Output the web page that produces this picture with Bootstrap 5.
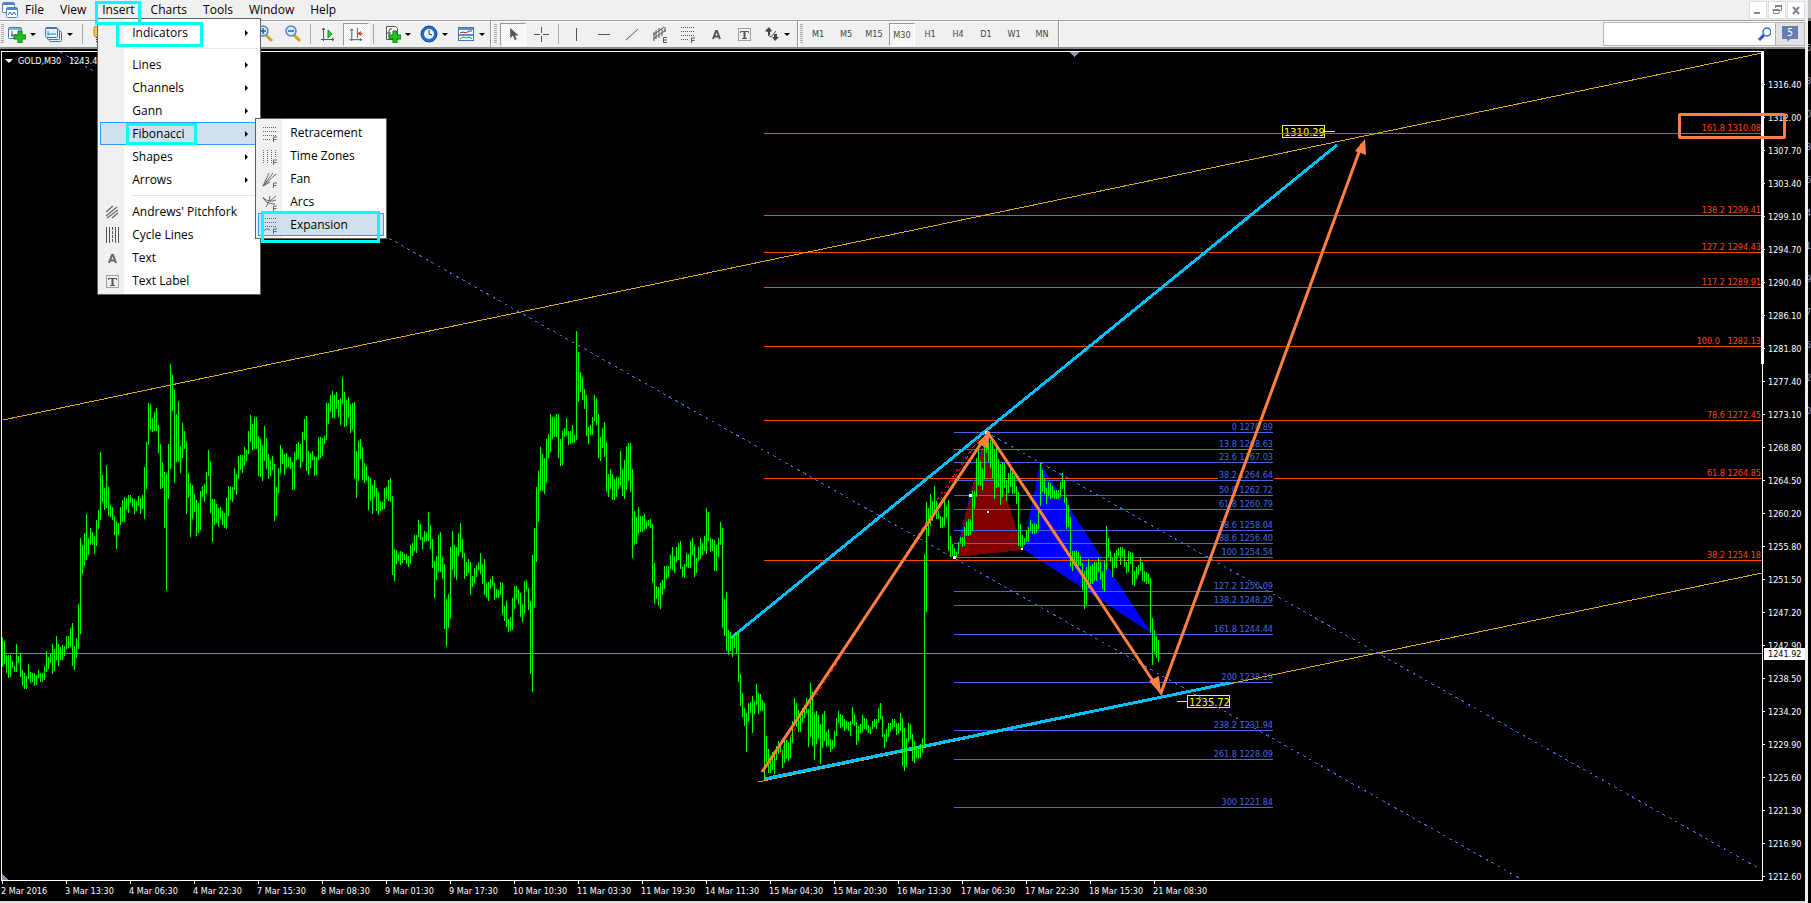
<!DOCTYPE html>
<html lang="en">
<head>
<meta charset="utf-8">
<meta name="viewport" content="width=device-width, initial-scale=1">
<title>GOLD,M30</title>
<link href="https://cdn.jsdelivr.net/npm/bootstrap@5.3.0/dist/css/bootstrap.min.css" rel="stylesheet">
<style>
  :root { --face: #f0f0f0; --edge: #a0a0a0; --cyan: #0ff; --coral: #ff8040; }
  body { background: #000; font-family: "Open Sans", "Noto Sans", sans-serif; font-size: 12px; line-height: 16px; color: #000; }
  button, a, input { font: inherit; color: inherit; }
  .plain { background: none; border: 0; padding: 0; }

  /* menu bar */
  .menubar { height: 20px; background: var(--face); }
  .menubar .app-icon { width: 20px; padding-left: 2px; }
  .menubar .menus { gap: 16px; padding-left: 5px; }
  .menus a { color: #000; text-decoration: none; display: block; line-height: 20px; }
  .win-btn { width: 18px; height: 18px; background: #fff; border: 1px solid #dedede; }

  /* toolbar */
  .toolbar { height: 29px; background: var(--face); border-top: 1px solid var(--edge); border-bottom: 2px solid #8c8c8c; box-shadow: inset 0 1px #fff; }
  .cell { width: 28px; height: 26px; display: flex; align-items: center; justify-content: center; font-family: "DejaVu Sans Condensed", sans-serif; font-size: 9px; color: #444; }
  .drop { width: 37px; height: 26px; display: flex; align-items: center; gap: 4px; padding-left: 3px; }
  .drop::after { content: ""; border: 3px solid transparent; border-top-color: #000; border-bottom: 0; }
  .drop-wide { padding-left: 6px; }
  .pressed > span, .pressed > svg { background: repeating-conic-gradient(#fff 0 25%, #eee 0 50%) 0 0 / 2px 2px; border: 1px solid #fff; border-top-color: #999; border-left-color: #999; width: 26px; height: 23px; padding: 3px 4px; }
  .pressed > span { padding: 3px 0; text-align: center; }
  .vsep { width: 7px; height: 20px; background: linear-gradient(#aaa, #aaa) 3px 0 / 1px 100% no-repeat; }
  .band-end { width: 4px; height: 26px; background: linear-gradient(90deg, #999 1px, #fff 1px) 2px 0 / 2px 100% no-repeat; }
  .grip { width: 5px; height: 20px; background: repeating-linear-gradient(#aaa 0 1px, transparent 1px 2px) 1px 0 / 3px 100% no-repeat; }
  .grip-wide { width: 7px; background-position: 2px 0; }
  .under-menu { width: 137px; }
  .find { width: 173px; height: 24px; background: #fff; border: 1px solid #b4b4b4; }
  .find input { border: 0; outline: 0; padding: 0 6px; min-width: 0; }
  .news { width: 29px; height: 24px; background: #e2e2e2; border: 1px solid #b4b4b4; border-left: 0; }

  /* drop-down menus */
  .popup { background: linear-gradient(90deg, var(--face) 26px, #fff 26px); border: 1px solid #606060; padding: 2px; z-index: 5; }
  .popup ul { margin: 0; padding: 0; list-style: none; }
  .insert-menu { position: absolute; left: -5px; top: 18px; width: 164px; }
  .fib-menu { position: absolute; left: 155px; top: -4px; width: 132px; z-index: 6; }
  .popup a { height: 23px; line-height: 23px; padding-left: 32px; position: relative; white-space: nowrap; }
  .popup a svg { position: absolute; left: 4px; top: 4px; }
  .popup a.chosen { background: #d1dfee; box-shadow: inset 0 0 0 1px #3399ff; }
  .more::after { content: ""; position: absolute; right: 10px; top: 9px; border: 3px solid transparent; border-left-color: #000; border-right: 0; }
  .rule { height: 9px; background: linear-gradient(#e4e4e4, #e4e4e4) 32px 4px / 100% 1px no-repeat; }
  .callout-box { position: absolute; border: 3px solid var(--cyan); z-index: 9; pointer-events: none; }
  .on-insert { left: -7px; top: 1px; width: 46px; height: 24px; }
  .on-indicators { left: 16px; top: 1px; width: 87px; height: 25px; }
  .on-fib { left: 26px; top: 1px; width: 71px; height: 22px; }
  .on-expansion { left: 3px; top: -2px; width: 119px; height: 32px; }

  /* chart */
  .chart-text, .chart-text text { font-family: "DejaVu Sans Condensed", "DejaVu Sans", sans-serif; font-size: 9px; line-height: 14px; }
  .chart-win { padding: 2px 0 0 1px; color: #fff; min-height: 0; }
  .plot { border: 1px solid #fff; position: relative; overflow: hidden; }
  .plot > svg { position: absolute; inset: 0; width: 100%; height: 100%; shape-rendering: crispEdges; }
  .plot text { shape-rendering: auto; }
  .plot text.tag { font-size: 11px; }
  .range { position: absolute; right: 41px; top: 2px; width: 3px; height: 313px; background: #fff; }
  .chart-title { position: absolute; left: 3px; top: 2px; gap: 5px; white-space: pre; }
  .chart-title::before { content: ""; border: 4px solid transparent; border-top-color: #fff; border-bottom: 0; }
  .prices { width: 42px; padding-top: 17px; margin-bottom: -20px; position: relative; }
  .prices div { height: 33px; display: flex; align-items: center; gap: 3px; }
  .prices div::before { content: ""; width: 2px; height: 1px; background: #fff; }
  .now { position: absolute; left: 1px; right: 0; top: 597px; height: 12px; line-height: 12px; background: #fff; color: #000; padding-left: 4px; }
  .target { position: absolute; right: 19px; top: 64px; width: 108px; height: 26px; border: 3px solid var(--coral); border-radius: 2px; }
  .times { height: 20px; overflow: hidden; }
  .times div { flex: 0 0 64px; white-space: nowrap; padding: 3px 0 0 1px; background: linear-gradient(#fff, #fff) 2px 0 / 1px 3px no-repeat; }
  .bottom-edge { height: 2px; background: #dcdcdc; }
  .next-win { width: 6px; background: #000; border-left: 3px solid #eee; overflow: hidden; color: #7fa4d8; }
  .next-head { height: 21px; background: #c4c4c4; border-bottom: 3px solid #777; margin-bottom: 11px; }
  .next-win p { height: 33px; margin: 0; text-indent: -2px; line-height: 33px; }
</style>
</head>
<body class="vh-100 d-flex overflow-hidden">
<div class="flex-grow-1 d-flex flex-column" style="min-width:0">

  <header class="menubar d-flex align-items-center">
    <div class="app-icon">
      <svg class="d-block" width="16" height="16" fill="#fff" stroke="#4a86c8"><rect x=".5" y=".5" width="12" height="10" rx="1"/><path d="M1 2h11" stroke-width="2"/><rect x="4.500" y="5.500" width="11" height="10" rx="1"/><path d="M5 7h10" stroke-width="2"/><path d="M6 13l2-3 2 3 2-3 2 3" fill="none" stroke="#3060b0"/></svg>
    </div>
    <nav aria-label="Main menu">
      <ul class="menus list-unstyled d-flex mb-0">
        <li><a href="#">File</a></li>
        <li><a href="#">View</a></li>
        <li class="position-relative"><a href="#">Insert</a><span class="callout-box on-insert"></span>
          <div class="popup insert-menu">
            <ul>
              <li class="position-relative"><a href="#" class="more">Indicators</a><span class="callout-box on-indicators"></span></li>
              <li class="rule"></li>
              <li><a href="#" class="more">Lines</a></li>
              <li><a href="#" class="more">Channels</a></li>
              <li><a href="#" class="more">Gann</a></li>
              <li class="position-relative"><a href="#" class="more chosen">Fibonacci</a><span class="callout-box on-fib"></span>
                <div class="popup fib-menu">
                  <ul>
                    <li><a href="#"><svg width="16" height="18" fill="none" stroke="#666"><path d="M1 2.500h13M1 6.500h13M1 10.500h13M1 14.500h8" stroke-dasharray="1 1"/><path d="M11.500 17v-5h3.500M11.500 14.500h3"/></svg>Retracement</a></li>
                    <li><a href="#"><svg width="16" height="18" fill="none" stroke="#666"><path d="M1.500 2v13M5.500 2v13M9.500 2v13M13.500 2v8" stroke-dasharray="1 1"/><path d="M11.500 17v-5h3.500M11.500 14.500h3"/></svg>Time Zones</a></li>
                    <li><a href="#"><svg width="16" height="18" fill="none" stroke="#666"><path d="M1 15L7 2M1 15L11 2M1 15L14 3M1 15l7-4"/><path d="M11.500 17v-5h3.500M11.500 14.500h3"/></svg>Fan</a></li>
                    <li><a href="#"><svg width="16" height="18" fill="none" stroke="#666"><path d="M4 13Q8 8 8 2M1 4q7 5 13 2M1 3q2 7 12 7M8 7l6-5"/><path d="M11.500 17v-5h3.500M11.500 14.500h3"/></svg>Arcs</a></li>
                    <li class="position-relative"><a href="#" class="chosen"><svg width="16" height="18" fill="none" stroke="#666"><path d="M1 1.500h13M1 5.500h13M1 9.500h13" stroke-dasharray="1 1"/><path d="M1 15q3-5 7-2M11.500 17v-5h3.500M11.500 14.500h3"/></svg>Expansion</a><span class="callout-box on-expansion"></span></li>
                  </ul>
                </div>
              </li>
              <li><a href="#" class="more">Shapes</a></li>
              <li><a href="#" class="more">Arrows</a></li>
              <li class="rule"></li>
              <li><a href="#"><svg width="16" height="16" fill="none" stroke="#666"><path d="M2 8l7-6M2 12L13 3M3 14L14 6M8 14l6-5" stroke-width="1.200"/></svg>Andrews' Pitchfork</a></li>
              <li><a href="#"><svg width="16" height="16" fill="none" stroke="#555"><path d="M2.500 0v16M5.500 0v16M11.500 0v16M14.500 0v16"/><path d="M8.500 0v16" stroke-dasharray="3 1"/></svg>Cycle Lines</a></li>
              <li><a href="#"><svg width="16" height="16" fill="none" stroke="#666" stroke-width="2"><path d="M5 13L8 5h1l3 8M6 10.500h5"/></svg>Text</a></li>
              <li><a href="#"><svg width="16" height="16" fill="none" stroke="#555"><path d="M2.500 2.500h12v12h-12z" stroke-dasharray="1 1"/><path d="M4.500 7V5.500h8V7M6 12.500h5"/><path d="M8.500 5v8" stroke-width="2"/></svg>Text Label</a></li>
            </ul>
          </div>
        </li>
        <li><a href="#">Charts</a></li>
        <li><a href="#">Tools</a></li>
        <li><a href="#">Window</a></li>
        <li><a href="#">Help</a></li>
      </ul>
    </nav>
    <div class="ms-auto d-flex" style="gap:1px">
      <button class="plain win-btn d-flex" aria-label="Minimize"><svg width="16" height="16" fill="none" stroke="#7b8794" stroke-width="2"><path d="M4 11h6"/></svg></button>
      <button class="plain win-btn d-flex" aria-label="Restore"><svg width="16" height="16" fill="none" stroke="#7b8794"><path d="M6.500 6V3.500h6v5H10M4 7.500h6v4H4.500z" stroke-width="1"/><path d="M6 4h7M4 8h6" stroke-width="2"/></svg></button>
      <button class="plain win-btn d-flex" aria-label="Close"><svg width="16" height="16" fill="none" stroke="#7b8794" stroke-width="2"><path d="M5 5l6 7M11 5l-6 7"/></svg></button>
    </div>
  </header>

  <div class="toolbar d-flex align-items-center" role="toolbar" aria-label="Tools">
    <span class="grip"></span>
    <button class="plain drop" aria-label="New chart"><svg width="18" height="17"><rect x=".5" y="1.500" width="13" height="11" rx="1" fill="#fff" stroke="#3d78b8"/><path d="M1 3h12" stroke="#7fb2e0" stroke-width="2"/><path d="M4 5v6M3 9h8" stroke="#357" fill="none"/><path d="M10 5h4v4h4v4h-4v4h-4v-4H6V9h4z" fill="#1fc41f" stroke="#0a7a0a"/></svg></button>
    <button class="plain drop" aria-label="Profiles"><svg width="18" height="17" fill="#e6f1fb" stroke="#3d78b8"><rect x="4.500" y="5.500" width="12" height="10" rx="1"/><rect x="2.500" y="3.500" width="12" height="10" rx="1"/><rect x=".5" y="1.500" width="12" height="10" rx="1"/><path d="M1 2.500h11M3 5v5M3 8h8" /></svg></button>
    <span class="vsep"></span>
    <button class="plain cell" aria-label="Market watch"><svg width="16" height="16"><path d="M2 2q0-2 3-2h6v11H4q-2 0-2-3z" fill="#f2cf4a" stroke="#b8860b"/><path d="M4.500 11v5" stroke="#333" stroke-dasharray="1 1"/></svg></button>
    <span class="under-menu"></span>
    <button class="plain cell" aria-label="Zoom in"><svg width="18" height="18" fill="none"><path d="M10 10l6 6" stroke="#d8a02c" stroke-width="3"/><circle cx="7" cy="6" r="5" fill="#d6ebfb" stroke="#4a86c8" stroke-width="1.500"/><path d="M4 6h6M7 3v6" stroke="#1d5fae" stroke-width="1.500"/></svg></button>
    <button class="plain cell" aria-label="Zoom out"><svg width="18" height="18" fill="none"><path d="M10 10l6 6" stroke="#d8a02c" stroke-width="3"/><circle cx="7" cy="6" r="5" fill="#d6ebfb" stroke="#4a86c8" stroke-width="1.500"/><path d="M4 6h6" stroke="#1d5fae" stroke-width="1.500"/></svg></button>
    <span class="vsep"></span>
    <button class="plain cell" aria-label="Auto scroll"><svg width="16" height="16" fill="none" stroke="#555"><path d="M3.500 2v13M1 13.500h13M2 4l1.500-2L5 4M12 12l2 1.500-2 1.500"/><path d="M8 4v8l4-4z" fill="#2fd04f" stroke="#109030"/></svg></button>
    <button class="plain cell pressed" aria-label="Chart shift"><svg viewBox="0 0 16 16" fill="none" stroke="#555"><path d="M3.500 2v13M1 13.500h13M2 4l1.500-2L5 4M12 12l2 1.500-2 1.500"/><path d="M9.500 1v11" stroke="#1d5fae"/><path d="M10 7l3-2v4zM12 7h3" fill="#d04a10" stroke="#d04a10"/></svg></button>
    <span class="vsep"></span>
    <button class="plain drop drop-wide" aria-label="Indicators"><svg width="18" height="18"><path d="M3.500 1.500h9l2 2v11h-11z" fill="#fff" stroke="#555"/><path d="M9 4q-3-1-3 2v6M4 8h4" stroke="#444" fill="none"/><path d="M10 6h4v4h4v4h-4v4h-4v-4H6v-4h4z" fill="#1fc41f" stroke="#0a7a0a"/></svg></button>
    <button class="plain drop drop-wide" aria-label="Periods"><svg width="18" height="18" fill="none"><circle cx="9" cy="9" r="6.500" fill="#eef6ff" stroke="#1f6fd0" stroke-width="3"/><circle cx="9" cy="9" r="8" stroke="#1a4a90"/><path d="M9 9V5M9 9l3 1" stroke="#333"/></svg></button>
    <button class="plain drop drop-wide" aria-label="Templates"><svg width="18" height="16" fill="none"><rect x="1.500" y="1.500" width="15" height="13" fill="#fff" stroke="#3d78b8"/><path d="M2 3h14M2 9h14" stroke="#4f95dc" stroke-width="2"/><path d="M3 7l3-1 3 1 3-2h3" stroke="#a02020"/><path d="M3 13l3-2 3 1 3-1 3 2" stroke="#209030"/></svg></button>
    <span class="band-end"></span><span class="grip grip-wide"></span>
    <button class="plain cell pressed" aria-label="Cursor"><svg viewBox="0 0 16 16"><path d="M5 1v11l3-3 2 5 2-1-2-4h4z" fill="#555"/></svg></button>
    <button class="plain cell" aria-label="Crosshair"><svg width="16" height="16" stroke="#555"><path d="M8.500 1v6M8.500 10v6M1 8.500h6M10 8.500h6"/></svg></button>
    <span class="vsep"></span>
    <button class="plain cell" aria-label="Vertical line"><svg width="16" height="16" stroke="#555"><path d="M8.500 2v13"/></svg></button>
    <button class="plain cell" aria-label="Horizontal line"><svg width="16" height="16" stroke="#555"><path d="M2 8.500h12"/></svg></button>
    <button class="plain cell" aria-label="Trendline"><svg width="16" height="16" stroke="#555"><path d="M2 14L14 3"/></svg></button>
    <button class="plain cell" aria-label="Channel"><svg width="17" height="17" stroke="#555" fill="none"><path d="M1 9L12 1M1 13L14 4M4 4v9M7 2v10M10 3v7M13 1v5M2 6v9"/><path d="M15 11.500h-3.500v5H15M12 14h3"/></svg></button>
    <button class="plain cell" aria-label="Fibonacci retracement"><svg width="16" height="17" fill="none" stroke="#555"><path d="M1 1.500h14M1 5.500h14M1 9.500h14M1 13.500h8" stroke-dasharray="1 1"/><path d="M11.500 17v-5h3.500M11.500 14.500h3"/></svg></button>
    <button class="plain cell" aria-label="Text"><svg width="16" height="16" fill="none" stroke="#555" stroke-width="2"><path d="M5 13L8 5h1l3 8M6 10.500h5"/></svg></button>
    <button class="plain cell" aria-label="Text label"><svg width="16" height="16" fill="none" stroke="#555"><path d="M2.500 2.500h12v12h-12z" stroke-dasharray="1 1"/><path d="M4.500 7V5.500h8V7M6 12.500h5"/><path d="M8.500 5v8" stroke-width="2"/></svg></button>
    <button class="plain drop drop-wide" aria-label="Arrows"><svg width="16" height="16" fill="#444"><path d="M1 5l4-4 3 4-2 1v3H4V6zM10 11V8h3v3h2l-4 4-3-4z"/><path d="M4 9l3 2 5-6" fill="none" stroke="#444"/></svg></button>
    <span class="band-end"></span><span class="grip"></span>
    <button class="plain cell">M1</button>
    <button class="plain cell">M5</button>
    <button class="plain cell">M15</button>
    <button class="plain cell pressed"><span>M30</span></button>
    <button class="plain cell">H1</button>
    <button class="plain cell">H4</button>
    <button class="plain cell">D1</button>
    <button class="plain cell">W1</button>
    <button class="plain cell">MN</button>
    <span class="band-end"></span>
    <label class="find ms-auto d-flex align-items-center pe-1">
      <input class="flex-grow-1 h-100" type="text" aria-label="Search">
      <svg width="14" height="14" fill="none"><path d="M6 8l-5 5" stroke="#2858b8" stroke-width="3"/><circle cx="9" cy="5" r="4" fill="#fff" stroke="#3068d0" stroke-width="1.500"/></svg>
    </label>
    <button class="plain news d-flex align-items-center justify-content-center" aria-label="5 messages">
      <svg width="18" height="18"><path d="M1 1h16v13H9l-2 3-1-3H1z" fill="#6480b0"/><text x="9" y="11" text-anchor="middle" font-family="DejaVu Sans Condensed" font-size="10" fill="#fff">5</text></svg>
    </button>
  </div>

  <main class="chart-win chart-text flex-grow-1 d-flex position-relative">
    <div class="plot flex-grow-1">
      <svg aria-label="GOLD M30 price chart"><g id="canvas" transform="translate(-2 -52)"></g></svg>
      <div class="chart-title d-flex align-items-center">GOLD,M30   1243.4</div>
    </div>
    <div class="prices" id="prices"></div>
    <div class="range"></div>
    <div class="target"></div>
  </main>
  <div class="times chart-text d-flex text-white" id="times"></div>
  <div class="bottom-edge"></div>
</div>
<aside class="next-win chart-text" aria-hidden="true">
  <div class="next-head"></div>
  <p>5</p><p>3</p><p>0</p><p>8</p><p>6</p><p>4</p><p>1</p><p>9</p><p>7</p><p>5</p><p>2</p><p>0</p>
</aside>

<script src="https://cdn.jsdelivr.net/npm/bootstrap@5.3.0/dist/js/bootstrap.bundle.min.js"></script>
<script>
// high-low pairs, one bar every 2px
const bars = `637-667 641-664 655-673 655-678 655-677 661-668 666-672 644-672 656-663 653-677 670-686 673-689 676-689 664-679 672-683 673-682 673-686 675-685 670-678 673-682 673-682 666-680 651-672 657-669 654-663 644-674 649-671 636-660 644-666 647-660 645-660 646-656 636-649 636-648 628-647 623-666 646-670 638-658 604-649 538-634 545-574 533-566 514-560 538-555 528-545 532-545 536-554 520-546 510-529 452-520 475-502 488-510 465-508 487-516 505-517 507-520 516-535 521-549 523-535 507-525 500-522 497-522 498-510 495-513 495-503 498-507 499-514 501-511 496-506 498-514 495-509 467-519 442-489 403-445 404-430 418-432 412-431 408-431 425-453 444-489 462-488 472-528 473-591 444-499 364-469 375-411 390-483 414-462 401-462 446-473 423-458 431-449 441-514 473-498 483-537 485-519 494-512 500-536 503-533 491-530 486-497 484-502 472-494 450-476 461-513 499-542 499-525 504-523 508-527 507-519 511-525 513-528 498-529 486-516 487-500 487-502 468-490 474-495 456-479 455-470 455-473 447-466 450-461 431-454 415-442 424-450 417-449 417-449 436-476 439-477 445-481 426-461 438-469 454-479 460-476 456-470 464-521 487-516 468-493 445-473 449-464 454-475 453-468 457-467 457-469 462-490 452-490 444-460 442-459 444-468 432-462 419-440 416-471 451-475 453-468 451-460 456-476 457-475 437-460 437-458 438-456 436-444 403-440 403-424 395-412 391-418 395-418 392-409 400-417 398-425 377-404 392-427 400-426 397-418 404-433 403-430 402-479 451-498 441-481 439-459 447-480 463-483 466-481 476-510 478-501 485-514 480-497 488-511 492-515 501-511 502-510 488-509 487-499 480-501 478-502 496-575 549-581 550-564 554-561 551-565 552-563 554-560 554-564 556-567 545-564 543-556 535-551 535-553 520-537
524-540 537-549 531-542 532-541 512-541 525-549 539-568 561-598 556-580 535-572 532-572 557-579 564-629 599-647 594-628 547-619 531-570 545-577 547-580 533-556 523-552 539-558 553-579 562-576 559-573 562-595 576-587 568-583 565-577 562-570 553-574 564-584 559-595 583-598 582-601 579-589 576-586 583-600 589-598 590-598 582-595 583-615 606-621 601-627 619-632 617-631 598-630 586-609 586-599 589-604 593-617 604-622 581-614 580-591 588-610 601-674 555-692 528-608 487-562 471-522 447-491 454-491 458-494 439-483 434-458 414-452 417-439 417-437 414-437 414-458 439-466 431-465 428-437 418-436 431-445 431-444 425-443 435-443 331-440 352-402 372-392 377-400 389-409 395-436 427-444 425-435 417-435 395-421 398-425 414-458 437-461 428-448 422-457 442-492 474-497 469-489 474-500 479-500 477-497 477-489 451-486 469-496 460-499 446-490 443-481 443-492 469-558 511-545 517-544 507-534 516-532 516-532 514-530 521-529 520-526 519-528 524-583 563-604 586-599 587-606 583-609 580-595 566-589 566-579 566-577 555-569 547-570 556-573 547-562 543-560 541-569 567-577 564-578 553-567 554-568 541-568 538-555 545-577 558-573 547-561 538-559 543-555 536-551 508-554 512-541 538-552 539-551 540-571 545-571 538-557 522-545 528-628 599-636 592-651 630-655 632-651 637-657 635-648 633-653 632-682 674-706 693-717
708-726 713-752 703-722 702-713 696-733 701-714 684-705 693-714 694-711 700-711 703-779 736-762 749-773 756-773 752-770 751-774 746-760 741-754 744-752 750-768 737-763 740-759 742-761 737-758 721-743 698-724 703-727 710-732 712-732 708-723 705-718 698-713 709-747 683-737 692-746 713-760 711-744 715-739 724-764 714-748 711-741 732-747 729-746 739-752 740-749 731-747 718-736 711-723 714-728 715-727 719-731 721-729 722-731 721-736 707-724 714-726 722-745 726-741 724-733 715-732 718-729 719-730 725-733 727-734 721-729 719-727 719-729 708-723 703-719 716-737 734-748 729-742 723-737 723-732 719-729 719-727 723-735 723-734 713-731 718-766 728-771 738-767 723-742 724-739 734-761 741-763 747-758 747-759 744-758 738-753 554-746 502-612 508-536 494-526 501-521 486-511 501-519 511-519 516-528 517-528 498-526 506-518 500-551 536-557 544-556 548-559
552-558 542-554 537-543 537-547 527-546 521-536 519-536 519-535 491-531 491-509 458-497 450-485 461-486 468-490 444-479 432-453 432-462 440-468 439-478 449-499 445-488 459-487 464-505 463-497 463-488 481-501 473-493 469-487 472-494 476-494 486-504 492-546 524-547 535-549 538-545 530-542 527-542 520-530 524-534 523-534 524-533 508-529 463-506 470-492 479-494 488-504 482-496 483-499 486-498 490-499 490-499 490-499 482-497 473-489 480-503 497-529 505-527 517-567 551-571 551-566 551-568 552-568 556-566 563-590 571-609 567-605 559-588 566-584 564-584 562-581 562-581 558-572 562-580 571-589 561-592 526-570 538-557 551-562 558-577 553-568 550-568 548-556 547-565 547-557 549-567 562-573 551-572 552-564 553-585 571-586 567-579 565-575 558-571 562-581 571-582 572-584 574-584 578-633 618-665 630-652 636-658 640-662`.split(/\s+/).map(b => b.split('-').map(Number));

const expansion = [[133,'161.8 1310.08'],[215,'138.2 1299.41'],[252,'127.2 1294.43'],[287,'117.2 1289.91'],[346,'100.0   1282.13'],[420,'78.6 1272.45'],[478,'61.8 1264.85'],[560,'38.2 1254.18']];
const retrace = [[432,'0 1270.89'],[449,'13.8 1268.63'],[462,'23.6 1267.03'],[480,'38.2 1264.64'],[495,'50.0 1262.72'],[509,'61.8 1260.79'],[530,'78.6 1258.04'],[543,'88.6 1256.40'],[557,'100 1254.54'],[591,'127.2 1250.09'],[605,'138.2 1248.29'],[634,'161.8 1244.44'],[682,'200 1238.19'],[730,'238.2 1231.94'],[759,'261.8 1228.09'],[807,'300 1221.84']];

const rect = (x, y, w, h, c) => `<rect x="${x}" y="${y}" width="${w}" height="${h}" fill="${c}"/>`;
const line = (x1, y1, x2, y2, c, extra = '') => `<line x1="${x1}" y1="${y1}" x2="${x2}" y2="${y2}" stroke="${c}" ${extra}/>`;
const label = (x, y, t, c) => `<text x="${x}" y="${y}" text-anchor="end" fill="${c}" xml:space="preserve">${t}</text>`;
const dash = 'stroke-dasharray="3 4"', smooth = 'stroke-width="3" shape-rendering="auto"';
let s = '';
s += '<path d="M955 557L986 432L1023 550z" fill="#800000"/><path d="M1040 463L1023 549L1151 633z" fill="#00f"/>';
[[1282,125,1325,131],[1187,695,1177,701]].forEach(([x, y, tx, ty], i) => {
  s += rect(x, y, 43, 13, '#ff0') + rect(x + 1, y + 1, 41, 11, '#000') + rect(tx, ty, 10, 1, '#ff0');
  s += `<text class="tag" x="${x + 2}" y="${y + 11}" fill="#ff0">${i ? '1235.72' : '1310.29'}</text>`;
});
s += rect(2, 653, 1760, 1, '#778899');
expansion.forEach(([y]) => s += rect(764, y, 998, 1, '#ff4500'));
s += rect(1218, 478, 56, 1, '#000');
retrace.forEach(([y]) => s += rect(954, y, 319, 1, '#4169e1'));
expansion.forEach(([y, t]) => s += label(1761, y - 2, t, '#ff4500'));
retrace.forEach(([y, t]) => s += label(1273, y - 2, t, '#4169e1'));
s += line(60, 52, 1521, 879, '#4169e1', dash) + line(986, 432, 1760, 869, '#4169e1', dash);
s += line(955, 557, 986, 432, '#00f', dash);
s += line(764, 778, 984, 431, '#f00', dash) + line(986, 431, 1083, 577, '#f00', dash) + line(937, 500, 984, 431, '#f00', dash);
s += line(3, 420, 1762, 53, '#daa520') + line(758, 782, 1762, 573, '#daa520');
s += line(731, 638, 1337, 145, '#00bfff', 'stroke-width="3"') + line(764, 779, 1230, 683, '#00bfff', 'stroke-width="3"');
s += `<path fill="#0f0" d="${bars.map(([h, l], i) => `M${2 + i * 2} ${h}h1V${l}h-1z`).join('')}"/>`;
[[953,556,3],[969,494,3],[985,431,3],[987,511,2],[1021,548,2]].forEach(([x, y, n]) => s += rect(x, y, n, n, '#fff'));
s += `<path fill="none" stroke="#ff8040" ${smooth} d="M762 772L988 433L1161 693L1362 144"/>`;
s += '<path fill="#ff8040" shape-rendering="auto" d="M990 431L977 443L988 449zM1161 694L1149 681L1159 676zM1365 139L1355 151L1366 155z"/>';
s += '<path d="M1069 52h10l-5 5z" fill="#8395a7"/><path d="M2 873l6 7h-6z" fill="#8395a7"/>';
document.getElementById('canvas').innerHTML = s;

document.getElementById('prices').innerHTML = ['1316.40','1312.00','1307.70','1303.40','1299.10','1294.70','1290.40','1286.10','1281.80','1277.40','1273.10','1268.80','1264.50','1260.20','1255.80','1251.50','1247.20','1242.90','1238.50','1234.20','1229.90','1225.60','1221.30','1216.90','1212.60'].map(p => `<div>${p}</div>`).join('') + '<span class="now">1241.92</span>';
document.getElementById('times').innerHTML = ['2 Mar 2016','3 Mar 13:30','4 Mar 06:30','4 Mar 22:30','7 Mar 15:30','8 Mar 08:30','9 Mar 01:30','9 Mar 17:30','10 Mar 10:30','11 Mar 03:30','11 Mar 19:30','14 Mar 11:30','15 Mar 04:30','15 Mar 20:30','16 Mar 13:30','17 Mar 06:30','17 Mar 22:30','18 Mar 15:30','21 Mar 08:30'].map(t => `<div>${t}</div>`).join('');
</script>
</body>
</html>
